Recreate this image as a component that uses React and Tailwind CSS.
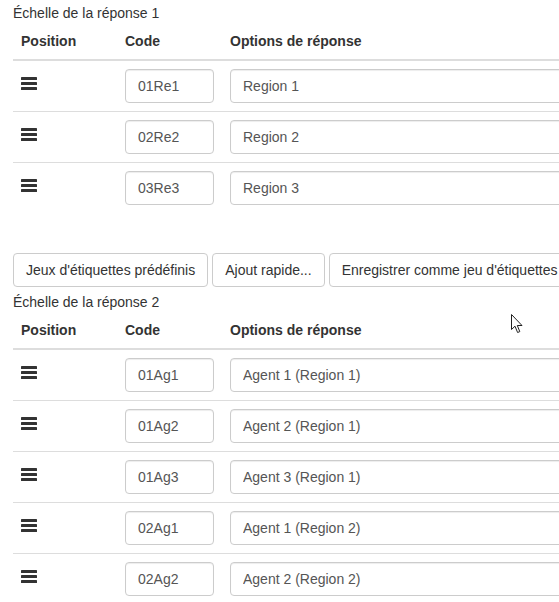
const scales = [
  {
    title: "Échelle de la réponse 1",
    rows: [
      { code: "01Re1", label: "Region 1" },
      { code: "02Re2", label: "Region 2" },
      { code: "03Re3", label: "Region 3" },
    ],
  },
  {
    title: "Échelle de la réponse 2",
    rows: [
      { code: "01Ag1", label: "Agent 1 (Region 1)" },
      { code: "01Ag2", label: "Agent 2 (Region 1)" },
      { code: "01Ag3", label: "Agent 3 (Region 1)" },
      { code: "02Ag1", label: "Agent 1 (Region 2)" },
      { code: "02Ag2", label: "Agent 2 (Region 2)" },
    ],
  },
];

const DragHandle = () => (
  <svg width="16" height="13" viewBox="0 0 16 13" className="mt-2" fill="#333">
    <rect x="0" y="0" width="16" height="3" rx="0.6" />
    <rect x="0" y="5" width="16" height="3" rx="0.6" />
    <rect x="0" y="10" width="16" height="3" rx="0.6" />
  </svg>
);

const inputClass =
  "h-[34px] w-full rounded-[4px] border border-[#ccc] bg-white px-3 text-[14px] leading-5 text-[#555] shadow-[inset_0_1px_1px_rgba(0,0,0,0.075)] outline-none";

const AnswerRow = ({ row, first }) => (
  <div className={`flex ${first ? "" : "border-t border-[#ddd]"}`}>
    <div className="w-[104px] shrink-0 px-2 py-2">
      <DragHandle />
    </div>
    <div className="w-[105px] shrink-0 px-2 py-2">
      <input className={inputClass} defaultValue={row.code} />
    </div>
    <div className="flex-1 px-2 py-2">
      <input className={inputClass} defaultValue={row.label} />
    </div>
  </div>
);

const ScaleTable = ({ scale }) => (
  <div>
    <div className="h-[23px] pt-[4px] text-[14px] leading-[19px] text-[#333]">
      {scale.title}
    </div>
    <div className="flex h-[38px] border-b-2 border-[#ddd] text-[14px] font-bold leading-5 text-[#333]">
      <div className="w-[104px] shrink-0 px-2 py-2">Position</div>
      <div className="w-[105px] shrink-0 px-2 py-2">Code</div>
      <div className="flex-1 px-2 py-2">Options de réponse</div>
    </div>
    {scale.rows.map((row, i) => (
      <AnswerRow key={row.code} row={row} first={i === 0} />
    ))}
  </div>
);

const Button = ({ children }) => (
  <button className="h-[34px] shrink-0 whitespace-nowrap rounded-[4px] border border-[#ccc] bg-white px-3 text-[14px] leading-5 text-[#333]">
    {children}
  </button>
);

export default function App() {
  return (
    <div className="relative h-screen w-screen overflow-hidden bg-white font-['Liberation_Sans',Arial,sans-serif]">
      <div className="w-[760px] pl-[13px]">
        <ScaleTable scale={scales[0]} />
        <div className="mb-[2px] mt-10 flex gap-1">
          <Button>Jeux d'étiquettes prédéfinis</Button>
          <Button>Ajout rapide...</Button>
          <Button>Enregistrer comme jeu d'étiquettes</Button>
        </div>
        <ScaleTable scale={scales[1]} />
      </div>
      {/* mouse pointer */}
      <svg
        className="absolute left-[511px] top-[314px]"
        width="13"
        height="20"
        viewBox="0 0 13 20"
      >
        <path
          d="M0.5 0.5 L0.5 15.5 L4 12.2 L6.6 18.5 L8.8 17.6 L6.3 11.5 L11 11.5 Z"
          fill="#fff"
          stroke="#222"
          strokeWidth="1"
          strokeLinejoin="round"
        />
      </svg>
    </div>
  );
}
